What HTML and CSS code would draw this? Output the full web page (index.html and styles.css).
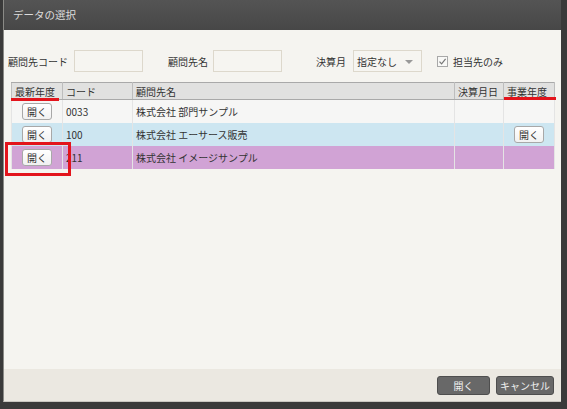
FILE: index.html
```html
<!doctype html>
<html>
 <head>
	<meta charset="UTF-8">
	<title>データの選択</title>
	<link rel="stylesheet" href="styles.css">
 </head>
 <body>
	<div class="dialog">
		<div class="titlebar">データの選択</div>
		<div class="content">
			<div class="filters">
				<span class="flabel">顧問先コード</span>
				<input class="finput code">
				<span class="flabel name-label">顧問先名</span>
				<input class="finput name">
				<span class="flabel month-label">決算月</span>
				<div class="fselect">
					<span>指定なし</span>
					<i class="arrow"></i>
				</div>
				<span class="fcheck">
					<svg width="11" height="11" viewBox="0 0 11 11"><rect x="0.5" y="0.5" width="10" height="10" fill="#f8f8f6" stroke="#a8a8a8"/><path d="M2.5 5.6 L4.6 7.8 L8.6 2.8" fill="none" stroke="#777" stroke-width="1.2"/></svg>
				</span>
				<span class="flabel">担当先のみ</span>
			</div>
			<div class="grid_wrap">
				<table class="grid">
					<colgroup>
						<col class="w1"><col class="w2"><col class="w3"><col class="w4"><col class="w5">
					</colgroup>
					<thead>
						<tr>
							<th class="mark_left">最新年度</th>
							<th>コード</th>
							<th>顧問先名</th>
							<th>決算月日</th>
							<th class="mark_right">事業年度</th>
						</tr>
					</thead>
					<tbody>
						<tr class="row_plain">
							<td class="center"><button class="rowbtn">開く</button></td>
							<td>0033</td>
							<td>株式会社 部門サンプル</td>
							<td></td>
							<td></td>
						</tr>
						<tr class="row_blue">
							<td class="center"><button class="rowbtn">開く</button></td>
							<td>100</td>
							<td>株式会社 エーサース販売</td>
							<td></td>
							<td class="center"><button class="rowbtn">開く</button></td>
						</tr>
						<tr class="row_purple">
							<td class="center"><button class="rowbtn">開く</button></td>
							<td>211</td>
							<td>株式会社 イメージサンプル</td>
							<td></td>
							<td></td>
						</tr>
					</tbody>
				</table>
				<div class="focus_box"></div>
			</div>
		</div>
		<div class="footer">
			<button class="fbtn open">開く</button>
			<button class="fbtn cancel">キャンセル</button>
		</div>
	</div>
 </body>
</html>
```

FILE: styles.css
```css
body{
	margin:0;
	background:#3a3a3a;
	font-family:"Noto Sans CJK JP","Liberation Sans",sans-serif;
	font-size:10px;
	color:#333;
}
/* ダイアログ本体 */
.dialog{
	margin-left:3px;
	width:558px;
	height:402px;
	box-sizing:border-box;
	display:flex;
	flex-direction:column;
	border-bottom:1px solid #c9c7c1;
	border-left:1px solid #8a8a86;
}
.titlebar{
	height:30px;
	line-height:30px;
	padding-left:9px;
	background:linear-gradient(#545454,#474747);
	color:#dcdcdc;
	font-size:10.5px;
}
.content{
	flex:1;
	background:#f5f4f0;
	padding:20px 0 0 4px;
}
.footer{
	height:32px;
	background:#ebe8e1;
	display:flex;
	justify-content:flex-end;
	align-items:center;
	gap:6px;
	padding-right:7px;
}

/* 検索条件 */
.filters{
	display:flex;
	align-items:center;
	height:22px;
}
.finput{
	box-sizing:border-box;
	width:69px;
	height:22px;
	margin:0;
	background:#f6f5f1;
	border:1px solid #ddd8cc;
	border-radius:0;
	padding:0;
}
.code{margin-left:6px}
.name-label{margin-left:25px}
.name{margin-left:5px}
.month-label{margin-left:34px}
.fselect{
	box-sizing:border-box;
	width:69px;
	height:22px;
	margin-left:7px;
	border:1px solid #ddd8cc;
	background:#f6f5f1;
	display:flex;
	align-items:center;
	justify-content:space-between;
	padding:0 8px 0 3px;
}
.arrow{
	width:0;height:0;
	border-left:4px solid transparent;
	border-right:4px solid transparent;
	border-top:4px solid #999;
	margin-top:1px;
}
.fcheck{
	display:flex;
	margin:0 5px 0 15px;
}

/* 一覧 */
.grid_wrap{
	position:relative;
	margin:10px 0 0 3px;
	width:543px;
}
.grid{
	width:543px;
	table-layout:fixed;
	border-collapse:collapse;
}
.w1{width:51px}
.w2{width:70px}
.w3{width:322px}
.w4{width:49px}
.w5{width:51px}
.grid th{
	height:16px;
	padding:0 0 0 3px;
	text-align:left;
	font-weight:normal;
	background:#e1e1e0;
	border-top:1px solid #a9a9a9;
	border-bottom:1px solid #a9a9a9;
	border-right:1px solid #bdbdbd;
	border-left:1px solid #bdbdbd;
	position:relative;
}
.grid td{
	height:23px;
	padding:0 0 0 3px;
	border-left:1px solid #e4e4e4;
	border-right:1px solid #e4e4e4;
	white-space:nowrap;
}
.grid td.center{padding:0;text-align:center}
.row_plain{background:#f6f6f5}
.row_blue{background:#cde6f1}
.row_purple{background:#d1a3d5}

.rowbtn{
	box-sizing:border-box;
	width:30px;
	height:17px;
	padding:0;
	font:inherit;
	color:#333;
	background:linear-gradient(#fff,#f1f1f1);
	border:1px solid #a8a8a8;
	border-radius:3px;
	vertical-align:middle;
}

/* 注目箇所の赤い印 */
.mark_left::after,.mark_right::after{
	content:"";
	position:absolute;
	bottom:-2px;
	height:3px;
	background:#e3141c;
}
.mark_left::after{left:-1px;right:3px}
.mark_right::after{left:0;right:-2px;bottom:-1px}
.focus_box{
	position:absolute;
	left:-6px;
	top:60px;
	width:66px;
	height:34px;
	box-sizing:border-box;
	border:3px solid #e3141c;
}

.fbtn{
	box-sizing:border-box;
	height:19px;
	padding:0;
	font:inherit;
	color:#f0f0f0;
	background:#686868;
	border:1px solid #4e4e4e;
	border-radius:3px;
}
.open{width:53px}
.cancel{width:58px}
```
